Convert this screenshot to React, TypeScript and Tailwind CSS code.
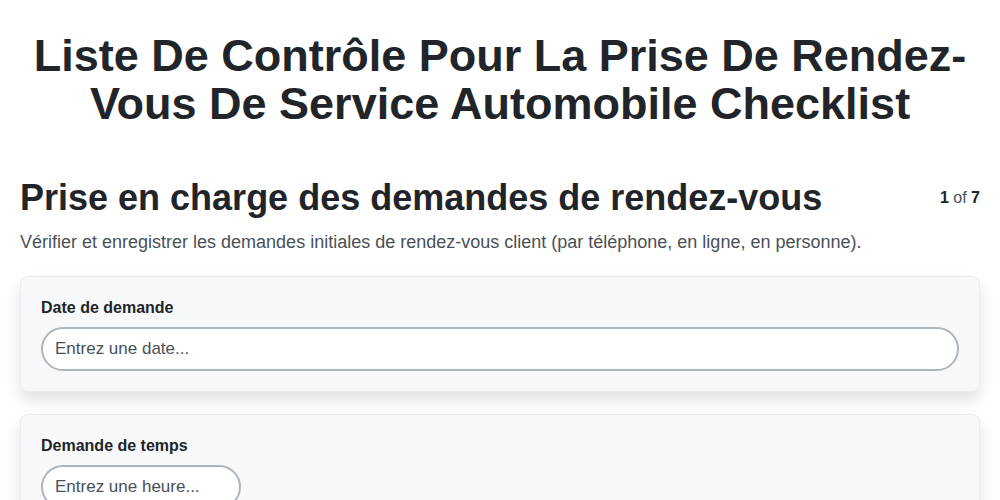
export default function App() {
  const fields = [
    { label: 'Date de demande', placeholder: 'Entrez une date...', wide: true },
    { label: 'Demande de temps', placeholder: 'Entrez une heure...', wide: false },
    { label: 'Nom du client', placeholder: 'Entrez du texte...', wide: true },
  ];

  return (
    <div className="min-h-screen bg-white font-['Liberation_Sans',Arial,sans-serif] text-[#212529]">
      <div className="mx-auto px-5 pt-8 pb-10">
        <h1 className="text-center text-[45px] leading-[48px] font-bold mb-[50px]">
          Liste De Contrôle Pour La Prise De Rendez-Vous De Service Automobile Checklist
        </h1>

        <div className="flex items-center justify-between">
          <h2 className="text-4xl font-bold">Prise en charge des demandes de rendez-vous</h2>
          <div className="text-base text-[#495057]">
            <span className="font-bold text-[#212529]">1</span> of{' '}
            <span className="font-bold text-[#212529]">7</span>
          </div>
        </div>
        <p className="mt-2.5 mb-5 text-lg text-[#495057]">
          Vérifier et enregistrer les demandes initiales de rendez-vous client (par téléphone, en ligne, en personne).
        </p>

        <div className="flex flex-col gap-[22px]">
          {fields.map((f) => (
            <div
              key={f.label}
              className="rounded-lg border border-[#e9ecef] bg-[#f7f8fa] px-5 pt-[19px] pb-5 shadow-[0_8px_16px_rgba(0,0,0,0.12)]"
            >
              <label className="block mb-[7px] text-base font-bold">{f.label}</label>
              <input
                type="text"
                placeholder={f.placeholder}
                className={`${f.wide ? 'w-full' : 'w-[200px]'} rounded-full border-2 border-[#adb5bd] bg-white px-3 py-2 text-[17px] leading-6 text-[#212529] placeholder:text-[#495057] outline-none`}
              />
            </div>
          ))}
        </div>
      </div>
    </div>
  );
}
